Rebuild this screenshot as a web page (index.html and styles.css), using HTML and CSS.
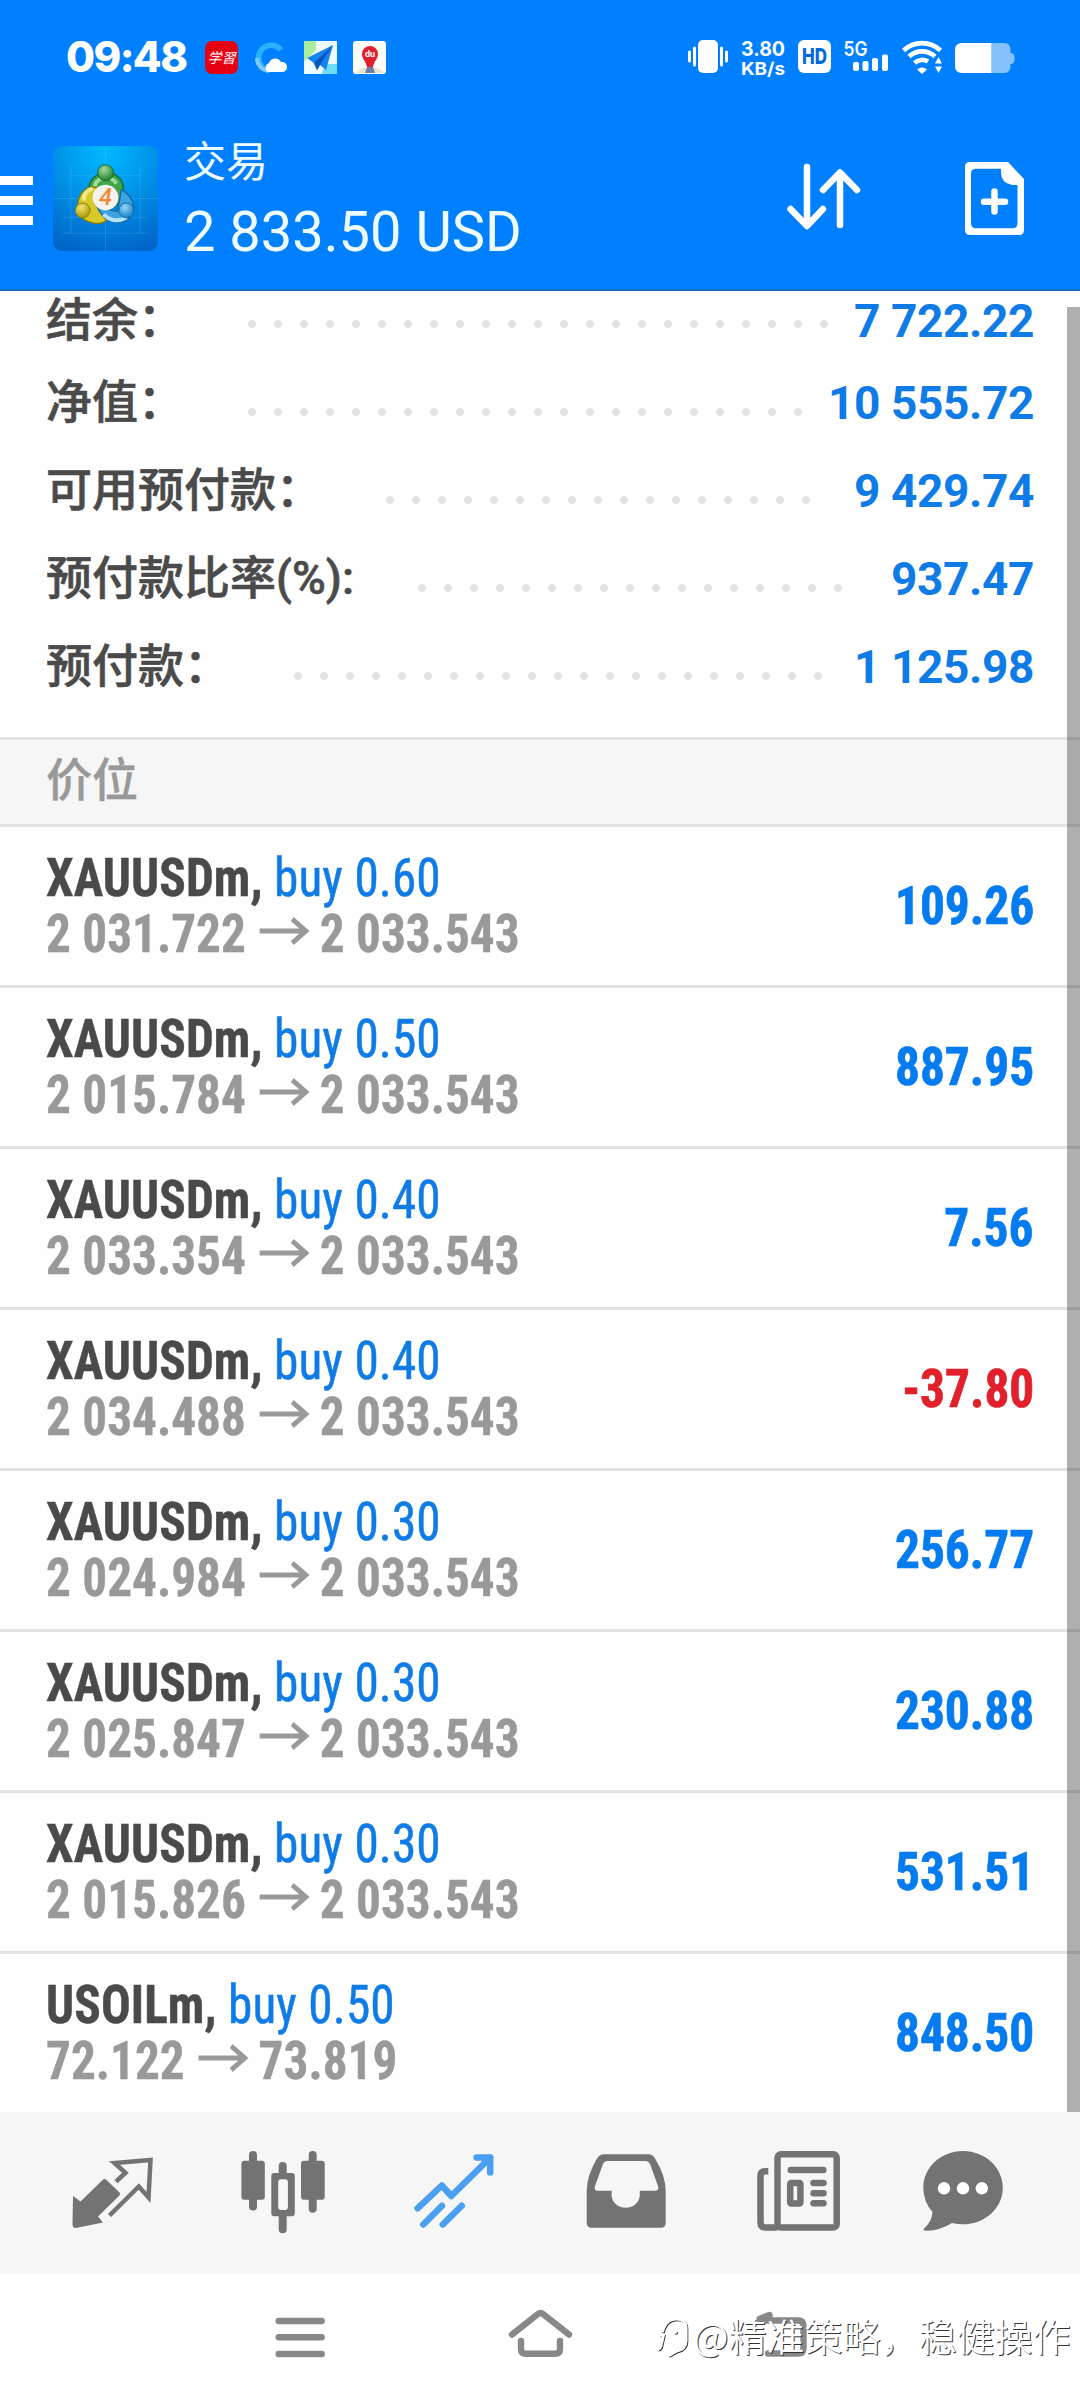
FILE: index.html
```html
<!DOCTYPE html>
<html lang="zh-CN">
<head>
<meta charset="utf-8">
<title>交易</title>
<link rel="stylesheet" href="styles.css">
</head>
<body>
<header class="header">
  <div class="status">
    <span class="clock">09:48</span>
    <svg class="apps" width="181" height="33" viewBox="205 41 181 33">
      <defs>
        <linearGradient id="ring" x1="0" y1="0" x2="1" y2="1"><stop offset="0" stop-color="#1cb5ff"/><stop offset=".5" stop-color="#35b0ff"/><stop offset="1" stop-color="#0a6fe8"/></linearGradient>
      </defs>
      <rect x="205" y="41" width="33" height="33" rx="7" fill="#e60012"/>
      <text x="221.500" y="63" class="study" text-anchor="middle">学習</text>
      <path d="M281 50A12.500 12.500 0 1 0 269 70" fill="none" stroke="url(#ring)" stroke-width="5.500"/>
      <path d="M257 58A13 13 0 0 0 269 71" fill="none" stroke="#7ccaff" stroke-width="4"/>
      <path d="M268 72a5 5 0 0 1 1-9 6.500 6.500 0 0 1 12-1 5 5 0 0 1 2 10z" fill="#fff"/>
      <rect x="304" y="41" width="33" height="33" fill="#eefcff"/>
      <path d="M304 41h12v9l-12 12z" fill="#a8ee9c"/><path d="M325 64h12v10h-15z" fill="#6edcff"/>
      <path d="M333 45L307 58l7 5 3 7 3-5 6 5z" fill="#1683ef"/><path d="M333 45l-19 18 3 7 3-5z" fill="#0b57bd"/>
      <rect x="353" y="41" width="33" height="33" rx="3" fill="#fffdf8"/>
      <path d="M355 73q8-8 15-4 8-4 14 4z" fill="#e9e5cf"/>
      <path d="M370 46a8 8 0 0 1 8 8c0 5-4 7-5 13h-6c-1-6-5-8-5-13a8 8 0 0 1 8-8z" fill="#e0202c"/>
      <path d="M367 67h6l2 6h-10z" fill="#6d7fa6"/>
      <text x="370" y="57" class="du" text-anchor="middle">du</text>
    </svg>
    <svg class="signals" width="330" height="36" viewBox="688 40 330 36" fill="#fff">
      <rect x="698" y="40" width="20" height="33" rx="5"/>
      <path d="M689.500 52v9M694.500 48v17M721.500 48v17M726.500 52v9" stroke="#fff" stroke-width="3" stroke-linecap="round"/>
      <text x="741" y="56" class="net" textLength="44" lengthAdjust="spacingAndGlyphs">3.80</text>
      <text x="741" y="75" class="net net-unit" textLength="44" lengthAdjust="spacingAndGlyphs">KB/s</text>
      <rect x="798" y="40" width="33" height="33" rx="6"/>
      <text x="802" y="64" class="hd" textLength="25" lengthAdjust="spacingAndGlyphs">HD</text>
      <text x="843.500" y="56" class="gen" textLength="24" lengthAdjust="spacingAndGlyphs">5G</text>
      <rect x="853" y="62" width="6" height="9" rx="2"/><rect x="862.500" y="61" width="6" height="10" rx="2"/><rect x="872" y="58" width="6" height="13" rx="2"/><rect x="882" y="54.500" width="6" height="16.500" rx="2"/>
      <g fill="none" stroke="#fff" stroke-width="4.600"><path d="M903.500 50.500a27 27 0 0 1 37 0"/><path d="M909 56.500a19 19 0 0 1 26 0"/><path d="M914.500 63a11 11 0 0 1 13.500-1.500"/></g>
      <path d="M917 69.500q5-4 10 0l-5 4.500zM938.500 57l3.500 6.500h-7zM938.500 73l3.500-6.500h-7z"/>
      <path d="M991.500 43h13q6 0 6 7v3q4 0 4 4v3q0 4-4 4v2q0 7-6 7h-13z" fill="#85c1ff"/>
      <path d="M991.500 43H962q-7 0-7 7v16q0 7 7 7h29.500z"/>
    </svg>
  </div>
  <div class="appbar">
    <div class="menu"><i></i><i></i><i></i></div>
    <svg class="logo" width="105" height="105" viewBox="0 0 106 106">
      <defs>
        <radialGradient id="sky" cx=".5" cy=".05" r="1"><stop offset="0" stop-color="#00b9ff"/><stop offset=".45" stop-color="#0094e8"/><stop offset="1" stop-color="#0065c8"/></radialGradient>
        <radialGradient id="green" cx=".4" cy=".3" r=".7"><stop offset="0" stop-color="#a6dc9a"/><stop offset="1" stop-color="#1f8430"/></radialGradient>
        <radialGradient id="gold" cx=".4" cy=".3" r=".7"><stop offset="0" stop-color="#f4e473"/><stop offset="1" stop-color="#a99a08"/></radialGradient>
        <radialGradient id="aqua" cx=".4" cy=".3" r=".7"><stop offset="0" stop-color="#93d6fb"/><stop offset="1" stop-color="#1682c8"/></radialGradient>
      </defs>
      <rect width="106" height="106" rx="9" fill="url(#sky)"/>
      <path d="M0 53h106M53 0v106M10 88h86M18 20v68M88 20v68M18 30h70M10 72h86" stroke="#6fd0ff" stroke-opacity=".22"/>
      <path d="M36 46C35 22 70 20 71 43c0 8-3 15-9 18L50 42z" fill="#3fa548" stroke="#1d6e35" stroke-width="1.500"/>
      <path d="M42 43c0-12 16-15 22-5" fill="none" stroke="#9ddc9a" stroke-width="4"/>
      <path d="M45 42C30 38 22 54 26 69c6 9 22 12 28 6L42 58z" fill="#d9c928" stroke="#7e7a17" stroke-width="1.500"/>
      <path d="M69 44c14 8 17 24 5 31-10 5-23 1-29-13l20 4z" fill="#3fa3e0" stroke="#146ca8" stroke-width="1.500"/>
      <path d="M31 55c0-7 4-11 9-12" fill="none" stroke="#f1e88d" stroke-width="4"/>
      <path d="M51 69c8 8 18 7 23 3" fill="none" stroke="#b5e3ff" stroke-width="4"/>
      <circle cx="53" cy="27" r="8" fill="url(#green)" stroke="#17652c"/>
      <circle cx="30" cy="65" r="7.500" fill="url(#gold)" stroke="#8a8110"/>
      <circle cx="74" cy="65" r="7.500" fill="url(#aqua)" stroke="#176ba6"/>
      <circle cx="53" cy="52" r="13" fill="#f4f3f0"/>
      <text x="53" y="60" text-anchor="middle" class="four">4</text>
    </svg>
    <div class="titles"><div class="title">交易</div><div class="profit">2 833.50 USD</div></div>
    <svg class="tools" width="240" height="76" viewBox="786 161 240 76" fill="none" stroke="#fff">
      <path d="M807 172v52M790.500 214L807 231l16-17" transform="translate(0 -5)" stroke-width="6.500" stroke-linecap="round" stroke-linejoin="round"/>
      <path d="M840 225v-51M823 190l17-17.500 17 17.500" stroke-width="6.500" stroke-linecap="round" stroke-linejoin="round"/>
      <path d="M970 162h38l16 17v51q0 5-5 5h-49q-5 0-5-5v-63q0-5 5-5zm6 6.700q-5 0-5 5v49.300q0 5.300 5 5.300h36.500q5 0 5-5.300v-38h-5.500q-11-2-11-12.500v-3.800z" fill="#fff" fill-rule="evenodd" stroke="none"/>
      <path d="M994.500 191.500v20M984 201.800h21" stroke-width="6.500" stroke-linecap="round"/>
    </svg>
  </div>
</header>

<main class="content">
  <section class="summary">
    <div class="sum first"><span>结余：</span><i class="dots" style="width:598px"></i><b>7 722.22</b></div>
    <div class="sum"><span>净值：</span><i class="dots" style="width:572px"></i><b>10 555.72</b></div>
    <div class="sum"><span>可用预付款：</span><i class="dots" style="width:442px"></i><b>9 429.74</b></div>
    <div class="sum"><span>预付款比率(%):</span><i class="dots" style="width:442px"></i><b>937.47</b></div>
    <div class="sum"><span>预付款：</span><i class="dots" style="width:546px"></i><b>1 125.98</b></div>
  </section>
  <h2 class="section">价位</h2>
  <section class="positions">
    <article class="pos"><div class="trade"><p class="deal"><b>XAUUSDm,</b> buy 0.60</p><p class="quote"><span>2 031.722</span><svg class="arrow" viewBox="0 0 56 28"><path d="M0 14h52M36 2l15 12-15 12"/></svg><span>2 033.543</span></p></div><strong>109.26</strong></article>
    <article class="pos"><div class="trade"><p class="deal"><b>XAUUSDm,</b> buy 0.50</p><p class="quote"><span>2 015.784</span><svg class="arrow" viewBox="0 0 56 28"><path d="M0 14h52M36 2l15 12-15 12"/></svg><span>2 033.543</span></p></div><strong>887.95</strong></article>
    <article class="pos"><div class="trade"><p class="deal"><b>XAUUSDm,</b> buy 0.40</p><p class="quote"><span>2 033.354</span><svg class="arrow" viewBox="0 0 56 28"><path d="M0 14h52M36 2l15 12-15 12"/></svg><span>2 033.543</span></p></div><strong>7.56</strong></article>
    <article class="pos"><div class="trade"><p class="deal"><b>XAUUSDm,</b> buy 0.40</p><p class="quote"><span>2 034.488</span><svg class="arrow" viewBox="0 0 56 28"><path d="M0 14h52M36 2l15 12-15 12"/></svg><span>2 033.543</span></p></div><strong class="loss">-37.80</strong></article>
    <article class="pos"><div class="trade"><p class="deal"><b>XAUUSDm,</b> buy 0.30</p><p class="quote"><span>2 024.984</span><svg class="arrow" viewBox="0 0 56 28"><path d="M0 14h52M36 2l15 12-15 12"/></svg><span>2 033.543</span></p></div><strong>256.77</strong></article>
    <article class="pos"><div class="trade"><p class="deal"><b>XAUUSDm,</b> buy 0.30</p><p class="quote"><span>2 025.847</span><svg class="arrow" viewBox="0 0 56 28"><path d="M0 14h52M36 2l15 12-15 12"/></svg><span>2 033.543</span></p></div><strong>230.88</strong></article>
    <article class="pos"><div class="trade"><p class="deal"><b>XAUUSDm,</b> buy 0.30</p><p class="quote"><span>2 015.826</span><svg class="arrow" viewBox="0 0 56 28"><path d="M0 14h52M36 2l15 12-15 12"/></svg><span>2 033.543</span></p></div><strong>531.51</strong></article>
    <article class="pos"><div class="trade"><p class="deal"><b>USOILm,</b> buy 0.50</p><p class="quote"><span>72.122</span><svg class="arrow" viewBox="0 0 56 28"><path d="M0 14h52M36 2l15 12-15 12"/></svg><span>73.819</span></p></div><strong>848.50</strong></article>
  </section>
  <div class="scrollbar"></div>
</main>

<nav class="tabs">
  <svg viewBox="26 2112 171 162"><path d="M73 2196l7.500 5.500 22-21.500q2-2 4 0l12.500 12q2 2 0 4L98 2216.500l5 6-27 5.500q-3.500 0-3.500-3.500z" fill="#737373"/><path d="M109.500 2215.500l29.300-29 9.700 11 2-37.500-36 3 11 9.700-9.500 9" fill="none" stroke="#737373" stroke-width="4.500"/></svg>
  <svg viewBox="197 2112 171 162"><g fill="#737373"><rect x="241.400" y="2160.700" width="23.400" height="39" rx="3"/><rect x="249" y="2151" width="8" height="59.500" rx="4"/><rect x="301" y="2160.700" width="23.700" height="39" rx="3"/><rect x="308.700" y="2151" width="8" height="61.700" rx="4"/><rect x="278.700" y="2162" width="8" height="15" rx="4"/><rect x="278.700" y="2212" width="8" height="21.300" rx="4"/><path d="M274.300 2173h17.500q3 0 3 3v37.300q0 3-3 3h-17.500q-3 0-3-3V2176q0-3 3-3zm6.900 6.300q-3 0-3 3v24.700q0 3 3 3h3.700q3 0 3-3v-24.700q0-3-3-3z" fill-rule="evenodd"/></g></svg>
  <svg viewBox="368 2112 171 162"><path d="M417.600 2208.300l24.200-22.800 9.500 10.500 39-38.500M476.500 2157.500h13.700v15M423.300 2224.500l18.700-18.700M442.800 2224.500l18.900-18.700" fill="none" stroke="#4a9ff0" stroke-width="6.500" stroke-linecap="round" stroke-linejoin="round"/></svg>
  <svg viewBox="539 2112 171 162"><path d="M604 2154.300h44q5 0 7.500 5 10.200 17 10.200 32V2223q0 4.700-5 4.700h-69q-5 0-5-4.700v-32q0-15 10-32 2.500-4.700 7.300-4.700zm3.500 6.700q-3 0-4.500 3l-8 22q-1.500 4.700 3 4.700h13.600v4a14.100 13 0 0 0 28.200 0v-4h15.200q4.500 0 3-4.700l-8-22q-1.500-3-4.500-3z" fill="#737373" fill-rule="evenodd"/></svg>
  <svg viewBox="710 2112 171 162"><g fill="none" stroke="#737373" stroke-width="6.500"><rect x="777.500" y="2154.300" width="59.200" height="73.200" rx="3.500"/><path d="M768.300 2171.200h-3q-4.800 0-4.800 4.800v46.500q0 5 5 5h12"/><path d="M790.800 2170h32.500M813.500 2183h10M813.500 2193.300h10M813.500 2203.300h10" stroke-linecap="round"/><rect x="790.200" y="2183" width="10.200" height="20.500" rx="1"/></g></svg>
  <svg viewBox="881 2112 171 162"><path d="M963 2151c22 0 39.800 16.400 39.800 36.700s-17.800 36.600-39.800 36.600q-6 0-11-1.300-12 7.500-25 7.700-5 0-3-2.200 8-7 8.500-16.500-9.200-10.500-9.200-24.300c0-20.300 17.700-36.700 39.700-36.700z" fill="#737373"/><g fill="#fff"><circle cx="944" cy="2188.300" r="6.200"/><circle cx="963" cy="2188.300" r="6.200"/><circle cx="981.800" cy="2188.300" r="6.200"/></g></svg>
</nav>

<footer class="sysnav">
  <svg viewBox="270 2305 540 60" width="540" height="60" fill="none" stroke="#888" stroke-width="6.400" stroke-linecap="round" stroke-linejoin="round">
    <path d="M278.700 2321h43M278.700 2337.300h43M278.700 2354h43"/>
    <path d="M512 2334.500l26-20.500q2.500-2 5 0l26 20.500M521 2341v8q0 4.800 5 4.800h29q5 0 5-4.800v-8"/>
    <path d="M762 2320.500h36q5.500 0 5.500 5.500v22q0 5.500-5.500 5.500h-30"/>
    <path d="M759.500 2319l10-4v5z"/>
  </svg>
  <div class="watermark">
    <svg width="34" height="50" viewBox="0 0 36 50" fill="none"><path d="M3 38q3 0 4-6l2-9H5M8 20q3-14 15-14 10 0 10 10v13q0 9-10 11l-9 5M20 20h3" transform="translate(1 1)" stroke="#222" stroke-width="2.500"/><path d="M3 38q3 0 4-6l2-9H5M8 20q3-14 15-14 10 0 10 10v13q0 9-10 11l-9 5M20 20h3" stroke="#fff" stroke-width="3"/></svg>
    <span>@精准策略，稳健操作</span>
  </div>
</footer>
</body>
</html>
```
FILE: styles.css
```css
* { box-sizing: border-box; margin: 0; padding: 0; }
body {
  width: 1080px;
  height: 2400px;
  overflow: hidden;
  background: #fefefe;
  color: #4a4a4a;
  font-family: Roboto, "Noto Sans CJK SC", sans-serif;
}
svg { display: block; flex: none; }

.header { height: 291px; background: #0080ff; border-bottom: 2px solid #1270c4; color: #f0fdff; }
.status { display: flex; height: 113px; padding: 40px 62px 0 66px; }
.clock { width: 139px; font: 800 42px/34px Inter, sans-serif; letter-spacing: -1.600px; color: #fff; white-space: nowrap; }
.apps { margin-top: 1px; }
.signals { margin-left: auto; overflow: visible; }
.study { font: italic 400 14px "Noto Sans CJK SC", sans-serif; fill: #fff; }
.du { font: 700 9px Roboto, sans-serif; fill: #fff; }
.net { font: 700 20px Inter, sans-serif; }
.net-unit { font-size: 17.500px; }
.hd { font: 800 22px Inter, sans-serif; fill: #0069d9; }
.gen { font: 600 20px Inter, sans-serif; }

.appbar { display: flex; }
.menu { display: flex; flex-direction: column; gap: 11px; width: 33px; padding-top: 63px; }
.menu i { height: 9px; background: #fff; }
.logo { margin: 33px 0 0 20px; }
.four { font: italic 500 24px Roboto, sans-serif; fill: #f28a35; }
.titles { margin: 25px 0 0 26px; white-space: nowrap; }
.title { font-size: 42px; line-height: 50px; }
.profit { margin-top: 11px; font-size: 56px; line-height: 66px; }
.tools { margin: 48px 54px 0 auto; }

.content { position: relative; height: 1821px; }
.summary { height: 446px; padding: 0 46px; font-weight: 500; font-size: 46px; line-height: 60px; }
.sum { display: flex; align-items: center; height: 88px; white-space: nowrap; }
.sum.first { height: 76px; }
.sum span { padding-bottom: 18px; -webkit-text-stroke: .6px; }
.sum b { margin-left: auto; padding-bottom: 16px; font-weight: 700; letter-spacing: -.4px; color: #0f7be6; }
.dots { height: 8px; margin: 2px 0 0 55px; background: radial-gradient(circle, #e2e2e2 3.700px, transparent 4.300px) 0 0 / 26px 8px; }
.first .dots { margin: 0 0 10px 55px; }

.section { height: 90px; padding-left: 46px; border: solid #e2e2e2; border-width: 3px 0; background: #f6f6f6; font-size: 46px; font-weight: 500; line-height: 81px; color: #999; -webkit-text-stroke: .4px; }
.pos { display: flex; justify-content: space-between; height: 161px; padding: 23px 46px 0; border-bottom: 3px solid #e2e2e2; font-stretch: 75%; font-size: 54px; line-height: 56px; white-space: nowrap; }
.pos:last-child { border: 0; }
.trade { transform: scaleX(.912); transform-origin: left; }
.deal { letter-spacing: .12px; color: #0f7be6; -webkit-text-stroke: .5px; }
.deal b { color: #4a4a4a; }
.quote { display: flex; font-weight: 700; color: #999; -webkit-text-stroke: .4px; }
.arrow { width: 56px; height: 28px; margin: 11px 10px 0 15px; fill: none; stroke: #999; stroke-width: 5; }
.pos strong { margin-top: 28px; color: #057bf0; transform: scaleX(.915); transform-origin: right; -webkit-text-stroke: .7px; }
.pos .loss { color: #e0202a; }
.scrollbar { position: absolute; top: 16px; right: 0; width: 13px; height: 1805px; background: rgba(0, 0, 0, .31); }

.tabs { display: flex; height: 162px; padding-left: 26px; background: #f6f6f6; }
.tabs svg { width: 171px; height: 162px; }
.sysnav { position: relative; height: 126px; padding: 31px 0 0 270px; background: #fff; }
.watermark { position: absolute; left: 655px; top: 38px; display: flex; gap: 4px; font: 350 38px/46px "Noto Sans CJK SC", sans-serif; color: #fff; text-shadow: 1px 1px 0 #333; white-space: nowrap; }
```
